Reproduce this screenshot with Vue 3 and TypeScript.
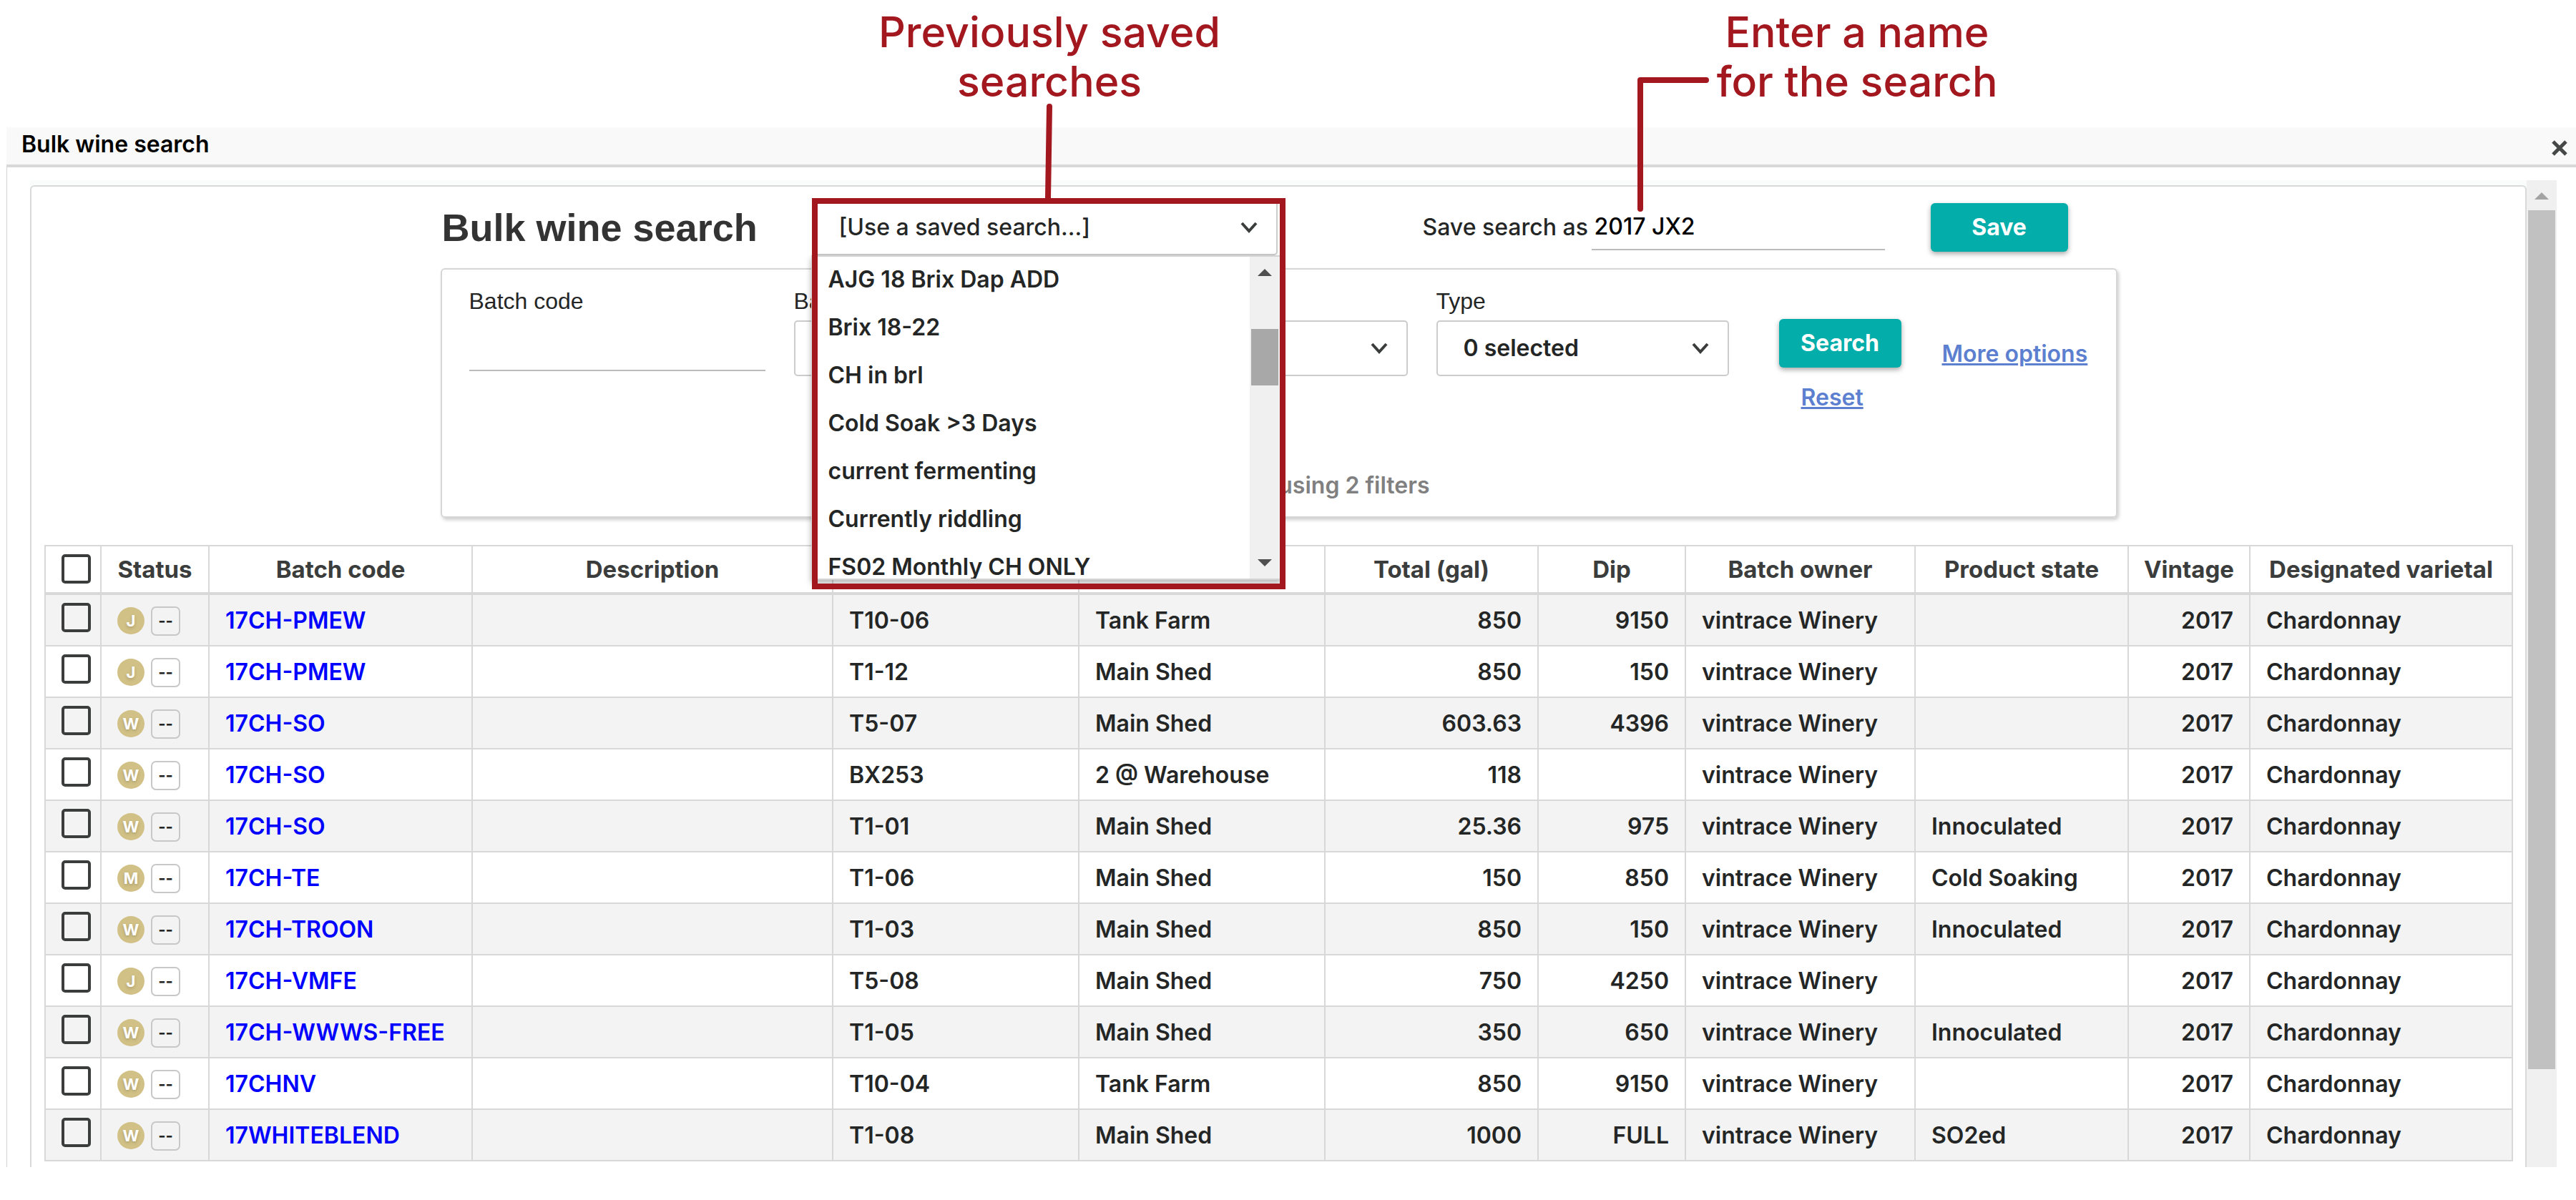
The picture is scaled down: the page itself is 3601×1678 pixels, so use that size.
<script setup lang="ts">
import { ref } from 'vue'

interface Batch {
  badge: string
  code: string
  vessel: string
  area: string
  total: string
  dip: string
  state: string
}

const savedSearches: string[] = [
  'AJG 18 Brix Dap ADD',
  'Brix 18-22',
  'CH in brl',
  'Cold Soak >3 Days',
  'current fermenting',
  'Currently riddling',
  'FS02 Monthly CH ONLY',
]

const batches: Batch[] = [
  { badge: 'J', code: '17CH-PMEW', vessel: 'T10-06', area: 'Tank Farm', total: '850', dip: '9150', state: '' },
  { badge: 'J', code: '17CH-PMEW', vessel: 'T1-12', area: 'Main Shed', total: '850', dip: '150', state: '' },
  { badge: 'W', code: '17CH-SO', vessel: 'T5-07', area: 'Main Shed', total: '603.63', dip: '4396', state: '' },
  { badge: 'W', code: '17CH-SO', vessel: 'BX253', area: '2 @ Warehouse', total: '118', dip: '', state: '' },
  { badge: 'W', code: '17CH-SO', vessel: 'T1-01', area: 'Main Shed', total: '25.36', dip: '975', state: 'Innoculated' },
  { badge: 'M', code: '17CH-TE', vessel: 'T1-06', area: 'Main Shed', total: '150', dip: '850', state: 'Cold Soaking' },
  { badge: 'W', code: '17CH-TROON', vessel: 'T1-03', area: 'Main Shed', total: '850', dip: '150', state: 'Innoculated' },
  { badge: 'J', code: '17CH-VMFE', vessel: 'T5-08', area: 'Main Shed', total: '750', dip: '4250', state: '' },
  { badge: 'W', code: '17CH-WWWS-FREE', vessel: 'T1-05', area: 'Main Shed', total: '350', dip: '650', state: 'Innoculated' },
  { badge: 'W', code: '17CHNV', vessel: 'T10-04', area: 'Tank Farm', total: '850', dip: '9150', state: '' },
  { badge: 'W', code: '17WHITEBLEND', vessel: 'T1-08', area: 'Main Shed', total: '1000', dip: 'FULL', state: 'SO2ed' },
]

const searchName = ref('2017 JX2')
const batchCode = ref('')
</script>

<template>
  <div class="page">
    <div class="callouts">
      <div class="callouts-inner">
        <p class="callout callout-saved">
          Previously saved<br />searches
          <svg class="leader leader-saved" viewBox="0 0 12 136" aria-hidden="true">
            <path d="M7 4 5 132" />
          </svg>
        </p>
        <p class="callout callout-name">
          Enter a name<br />for the search
          <svg class="leader leader-name" viewBox="0 0 108 192" aria-hidden="true">
            <path d="M98 6H6V186" />
          </svg>
        </p>
      </div>
    </div>

    <section class="dialog">
      <header class="titlebar">
        <span>Bulk wine search</span>
        <button class="close" type="button" aria-label="Close">
          <svg viewBox="0 0 24 24" aria-hidden="true"><path d="M3 3 21 21M21 3 3 21" /></svg>
        </button>
      </header>

      <div class="dialog-body">
        <div class="sheet-wrap">
          <div class="sheet">
            <div class="column save-row">
              <h1>Bulk wine search</h1>
              <div class="saved">
                <div class="select-box">
                  <select aria-label="Saved searches">
                    <option>[Use a saved search...]</option>
                  </select>
                  <svg class="chevron" viewBox="0 0 24 16" aria-hidden="true"><path d="M2 2 12 13 22 2" /></svg>
                </div>
                <div class="menu">
                  <ul role="listbox" aria-label="Saved searches">
                    <li v-for="name in savedSearches" :key="name" role="option">{{ name }}</li>
                  </ul>
                  <div class="menu-scroll">
                    <svg class="arrow" viewBox="0 0 20 10" aria-hidden="true"><path d="M0 10 10 0 20 10z" /></svg>
                    <div class="menu-thumb"></div>
                    <svg class="arrow" viewBox="0 0 20 10" aria-hidden="true"><path d="M0 0 10 10 20 0z" /></svg>
                  </div>
                </div>
                <div class="highlight"></div>
              </div>
              <label class="name-label" for="search-name">Save search as</label>
              <input id="search-name" v-model="searchName" class="line-input name-input" type="text" />
              <button class="primary save" type="button">Save</button>
            </div>

            <form class="column card" @submit.prevent>
              <div class="fields">
                <div class="field code-field">
                  <label for="batch-code">Batch code</label>
                  <input id="batch-code" v-model="batchCode" class="line-input" type="text" />
                </div>
                <div class="field">
                  <label for="batch-filter">Batch</label>
                  <div class="select-box">
                    <select id="batch-filter"></select>
                  </div>
                </div>
                <div class="field unlabelled">
                  <div class="select-box">
                    <select aria-label="Filter"></select>
                    <svg class="chevron" viewBox="0 0 24 16" aria-hidden="true"><path d="M2 2 12 13 22 2" /></svg>
                  </div>
                </div>
                <div class="field">
                  <label for="type-filter">Type</label>
                  <div class="select-box">
                    <select id="type-filter">
                      <option>0 selected</option>
                    </select>
                    <svg class="chevron" viewBox="0 0 24 16" aria-hidden="true"><path d="M2 2 12 13 22 2" /></svg>
                  </div>
                </div>
                <div class="actions">
                  <button class="primary" type="submit">Search</button>
                  <a href="#">Reset</a>
                </div>
                <a class="more" href="#">More options</a>
              </div>
              <p class="summary">using 2 filters</p>
            </form>

            <table>
              <colgroup>
                <col class="w-check" />
                <col class="w-status" />
                <col class="w-code" />
                <col />
                <col class="w-place" />
                <col class="w-place" />
                <col class="w-mid" />
                <col class="w-dip" />
                <col class="w-owner" />
                <col class="w-mid" />
                <col class="w-vintage" />
                <col class="w-varietal" />
              </colgroup>
              <thead>
                <tr>
                  <th class="check"><input type="checkbox" aria-label="Select all" /></th>
                  <th>Status</th>
                  <th>Batch code</th>
                  <th>Description</th>
                  <th></th>
                  <th></th>
                  <th>Total (gal)</th>
                  <th>Dip</th>
                  <th>Batch owner</th>
                  <th>Product state</th>
                  <th>Vintage</th>
                  <th>Designated varietal</th>
                </tr>
              </thead>
              <tbody>
                <tr v-for="(b, i) in batches" :key="i">
                  <td class="check"><input type="checkbox" :aria-label="b.code" /></td>
                  <td>
                    <div class="status">
                      <span class="dot">{{ b.badge }}</span>
                      <span class="dash">--</span>
                    </div>
                  </td>
                  <td><a class="code" href="#">{{ b.code }}</a></td>
                  <td></td>
                  <td>{{ b.vessel }}</td>
                  <td>{{ b.area }}</td>
                  <td class="num">{{ b.total }}</td>
                  <td class="num">{{ b.dip }}</td>
                  <td>vintrace Winery</td>
                  <td>{{ b.state }}</td>
                  <td class="num">2017</td>
                  <td>Chardonnay</td>
                </tr>
              </tbody>
            </table>
          </div>
        </div>
        <div class="page-scroll">
          <svg class="arrow" viewBox="0 0 20 10" aria-hidden="true"><path d="M0 10 10 0 20 10z" /></svg>
          <div class="page-thumb"></div>
        </div>
      </div>
    </section>
  </div>
</template>

<style>
body {
  margin: 0;
  background: #fff;
}
</style>

<style scoped>
.page,
.page * {
  box-sizing: border-box;
}

.page {
  font: 600 32px/40px Inter, "Liberation Sans", sans-serif;
  color: #242626;
  overflow: hidden;
}

button,
input,
select {
  font: inherit;
  color: inherit;
}

.column {
  width: 2344px;
  margin: 0 auto;
}

/* Callouts above the dialog */
.callouts {
  height: 178px;
  padding: 0 71px 0 44px;
}

.callouts-inner {
  display: flex;
  width: 2344px;
  margin: 0 auto;
  padding: 10px 0 0 602px;
  gap: 629px;
}

.callout {
  position: relative;
  z-index: 5;
  width: 500px;
  margin: 0;
  font-size: 59px;
  font-weight: 500;
  line-height: 69px;
  text-align: center;
  color: #a3171f;
}

.leader {
  position: absolute;
  fill: none;
  stroke: #a3171f;
  stroke-width: 8;
  stroke-linecap: round;
  stroke-linejoin: round;
}

.leader-saved {
  left: 243px;
  top: 135px;
  width: 12px;
  height: 136px;
}

.leader-name {
  left: -59px;
  top: 96px;
  width: 108px;
  height: 192px;
}

/* Dialog */
.dialog {
  margin-left: 9px;
}

.titlebar {
  display: flex;
  align-items: center;
  justify-content: space-between;
  height: 56px;
  padding: 0 11px 4px 21px;
  border-bottom: 4px solid #d8d8d8;
  background: #f9f9f9;
  color: #000;
}

.close {
  display: flex;
  padding: 10px 0 0;
  border: 0;
  background: none;
}

.close svg {
  width: 24px;
  height: 24px;
  stroke: #454846;
  stroke-width: 5;
}

.dialog-body {
  display: flex;
  padding: 18px 27px 0 32px;
  border-left: 1px solid #d4d4d4;
}

.sheet-wrap {
  flex: 1;
  padding-top: 7px;
  background: #fafcfb;
}

.sheet {
  padding: 0 17px 8px 18px;
  border: 2px solid #d8dad9;
  border-bottom: 0;
  border-radius: 6px 6px 0 0;
  background: #fff;
}

.page-scroll {
  display: flex;
  flex-direction: column;
  align-items: center;
  width: 42px;
  padding-top: 17px;
  background: #f0f0f0;
}

.arrow {
  flex: none;
  width: 20px;
  height: 10px;
  fill: #505050;
}

.page-scroll .arrow {
  fill: #a3a3a3;
}

.page-thumb {
  width: 38px;
  height: 1201px;
  margin-top: 15px;
  background: #c1c1c1;
}

/* Saved search row */
.save-row {
  display: flex;
  align-items: center;
  height: 114px;
  padding-bottom: 1px;
}

h1 {
  width: 519px;
  margin: 0;
  padding-left: 2px;
  font: 700 54px/64px "Liberation Sans", Arial, sans-serif;
  color: #333;
}

.saved {
  position: relative;
  z-index: 3;
  width: 651px;
}

.select-box {
  position: relative;
}

.select-box select {
  display: block;
  width: 100%;
  height: 78px;
  padding: 0 76px 0 36px;
  border: 2px solid #ccc;
  border-radius: 5px;
  background: #fff;
  appearance: none;
}

.saved select {
  font-weight: 500;
}

.chevron {
  position: absolute;
  right: 28px;
  top: 31px;
  width: 24px;
  height: 16px;
  fill: none;
  stroke: #3b3d3c;
  stroke-width: 4;
}

.menu {
  position: absolute;
  left: -1px;
  top: 78px;
  display: flex;
  width: 657px;
  height: 454px;
  border: 2px solid #d4d4d4;
  background: #fff;
  box-shadow: 0 4px 8px rgba(0, 0, 0, 0.3);
}

.menu ul {
  flex: 1;
  margin: 0;
  padding: 0;
  overflow: hidden;
  list-style: none;
}

.menu li {
  height: 67px;
  padding-left: 22px;
  line-height: 64px;
}

.menu-scroll {
  display: flex;
  flex-direction: column;
  align-items: center;
  width: 42px;
  padding: 17px 0;
  background: #f0f0f0;
}

.menu-thumb {
  width: 38px;
  height: 79px;
  margin: 74px 0 auto;
  background: #a8a8a8;
}

.highlight {
  position: absolute;
  left: 0;
  top: -2px;
  width: 662px;
  height: 547px;
  border: 8px solid #a3171f;
  pointer-events: none;
}

.name-label {
  width: 236px;
  margin-left: 203px;
  font-weight: 500;
  white-space: nowrap;
}

.line-input {
  padding: 0 4px;
  border: 0;
  border-bottom: 2px solid #bbb;
  border-radius: 0;
  background: none;
  color: #000;
}

.name-input {
  width: 410px;
  height: 64px;
  font-weight: 500;
}

.primary {
  height: 68px;
  padding: 0;
  border: 0;
  border-radius: 6px;
  background: #03aeaa;
  box-shadow: 0 3px 7px rgba(0, 0, 0, 0.35);
  font-weight: 700;
  color: #fff;
}

.save {
  width: 192px;
  margin-left: 64px;
}

/* Filter card */
.card {
  padding: 24px 0 24px 38px;
  border: 2px solid #d6d6d6;
  border-radius: 6px;
  box-shadow: 2px 3px 5px rgba(0, 0, 0, 0.2);
}

.fields {
  display: flex;
  align-items: flex-start;
  height: 173px;
}

.field {
  width: 409px;
  margin-right: 40px;
}

.field label {
  display: block;
  margin-bottom: 7px;
  font-family: "Liberation Sans", Arial, sans-serif;
  font-weight: 400;
}

.code-field {
  width: 414px;
}

.code-field .line-input {
  display: block;
  width: 100%;
  height: 71px;
}

.unlabelled {
  padding-top: 47px;
}

.actions {
  display: flex;
  flex-direction: column;
  align-items: flex-start;
  width: 171px;
  margin: 45px 57px 0 30px;
}

.actions .primary {
  width: 100%;
}

.actions a {
  margin: 22px 0 0 31px;
}

.actions a,
.more {
  color: #5c7fd0;
  text-decoration-thickness: 3px;
}

.more {
  margin-top: 74px;
  white-space: nowrap;
}

.summary {
  width: 1343px;
  margin: 85px 0 0;
  line-height: 39px;
  text-align: right;
  color: #808080;
}

/* Results */
table {
  width: 100%;
  margin-top: 38px;
  border-top: 2px solid #d8d8d8;
  border-left: 2px solid #d8d8d8;
  border-spacing: 0;
  table-layout: fixed;
}

.w-check { width: 78px; }
.w-status { width: 151px; }
.w-code { width: 368px; }
.w-place { width: 344px; }
.w-mid { width: 298px; }
.w-dip { width: 206px; }
.w-owner { width: 321px; }
.w-vintage { width: 170px; }
.w-varietal { width: 367px; }

th,
td {
  border-right: 2px solid #d8d8d8;
  white-space: nowrap;
}

th {
  height: 68px;
  padding: 0;
  border-bottom: 4px solid #d8d8d8;
  font-size: 33px;
  font-weight: 700;
  color: #3b3d3c;
}

td {
  height: 72px;
  padding: 2px 22px 0;
  border-bottom: 2px solid #d8d8d8;
}

tbody tr:nth-child(odd) {
  background: #f3f3f3;
}

.check {
  padding: 0 0 2px 22px;
  text-align: left;
}

.check input {
  display: block;
  width: 41px;
  height: 41px;
  margin: 0;
  border: 4px solid #3b3d3c;
  border-radius: 5px;
  appearance: none;
}

td.check {
  padding-bottom: 8px;
}

.num {
  text-align: right;
}

.code {
  color: #00f;
  text-decoration: none;
}

.status {
  display: flex;
  align-items: center;
  gap: 9px;
  font-size: 22px;
}

.dot {
  width: 38px;
  height: 38px;
  border-radius: 50%;
  background: #d2c186;
  font-weight: 700;
  line-height: 38px;
  text-align: center;
  text-shadow: 0 2px 4px rgba(0, 0, 0, 0.2);
  color: #fff;
}

.dash {
  width: 41px;
  height: 41px;
  border: 2px solid #c8c8c8;
  border-radius: 7px;
  font-weight: 700;
  line-height: 37px;
  text-align: center;
}
</style>
